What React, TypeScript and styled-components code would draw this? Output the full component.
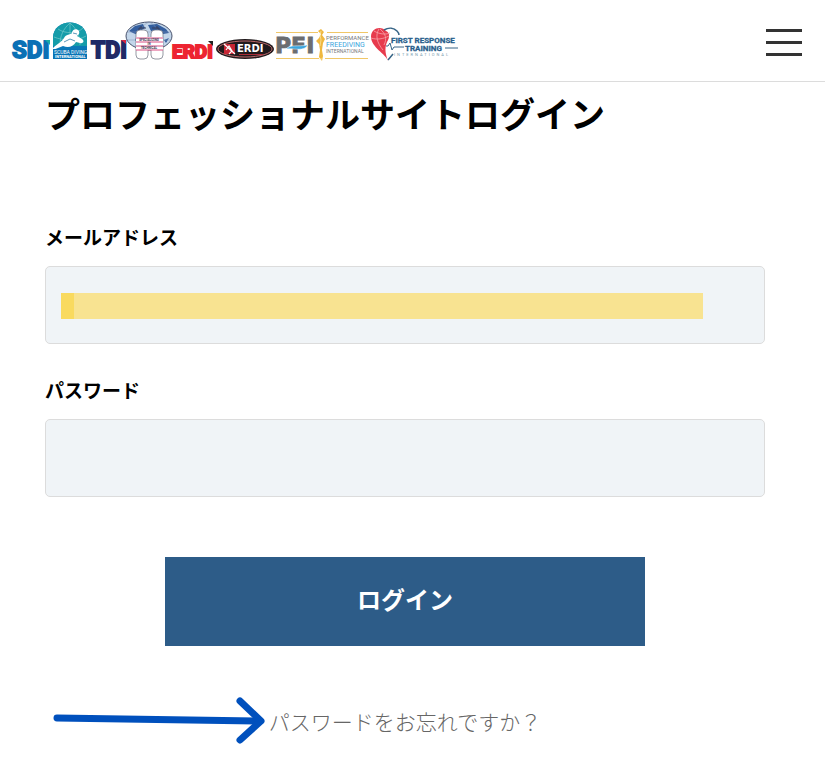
import React from "react";
import styled, { createGlobalStyle } from "styled-components";

const GlobalStyle = createGlobalStyle`
  *, *::before, *::after { box-sizing: border-box; }
  body {
    margin: 0;
    background: #fff;
    color: #000;
    font-family: "Noto Sans CJK JP", "Noto Sans", sans-serif;
  }
`;

const Header = styled.header`
  display: flex;
  align-items: center;
  justify-content: space-between;
  padding: 20px 23px 19px 11px;
  border-bottom: 1px solid #dcdcdc;
`;

const LogoLink = styled.a`
  display: flex;
  align-items: center;
  height: 42px;
  text-decoration: none;
`;

const Logo = styled.svg`
  display: block;
  flex: none;
  overflow: visible;
`;

const MenuButton = styled.button`
  display: flex;
  flex-direction: column;
  gap: 9px;
  padding: 2px 0 0;
  border: 0;
  background: none;
  cursor: pointer;
`;

const MenuBar = styled.span`
  width: 36px;
  height: 3px;
  background: #333;
`;

const Main = styled.main`
  padding: 8px 60px 16px 45px;
`;

const Title = styled.h1`
  margin: 0 0 88px;
  font-size: 35px;
  line-height: 45px;
  font-weight: 700;
`;

const Field = styled.div`
  margin-bottom: 32px;
`;

const Label = styled.label`
  display: block;
  margin-bottom: 16px;
  font-size: 19px;
  line-height: 27px;
  font-weight: 700;
`;

const InputFrame = styled.div`
  position: relative;
`;

const Input = styled.input`
  display: block;
  width: 100%;
  height: 78px;
  padding: 0 16px;
  border: 1px solid #dcdcdc;
  border-radius: 5px;
  background: #f0f4f7;
  font: inherit;
  font-size: 20px;
`;

const Highlight = styled.span`
  position: absolute;
  top: 27px;
  left: 16px;
  right: 62px;
  height: 26px;
  border-left: 13px solid #f9da5f;
  background: #f8e391;
  pointer-events: none;
`;

const SubmitButton = styled.button`
  display: block;
  width: 66.6667%;
  height: 89px;
  margin: 60px auto 51px;
  padding: 0 0 6px;
  border: 0;
  background: #2d5c88;
  color: #fff;
  font: inherit;
  font-size: 24px;
  font-weight: 700;
  cursor: pointer;
`;

const ForgotRow = styled.div`
  display: grid;
  grid-template-columns: 1fr auto 1fr;
  align-items: center;
`;

const Arrow = styled.svg`
  display: block;
  justify-self: end;
  margin-right: 4px;
`;

const ForgotLink = styled.a`
  color: #666;
  font-size: 21px;
  line-height: 32px;
  font-weight: 300;
  text-decoration: none;
`;

const roboto = { fontFamily: "Roboto, sans-serif" };
const robotoBold = { fontFamily: "Roboto, sans-serif", fontWeight: 700 };
const wideBold = { fontFamily: '"DejaVu Sans", sans-serif', fontWeight: 700 };

const SdiLogo = () => (
  <Logo width="78" height="42" viewBox="11 20 78 42">
    <text x="12" y="58" fontSize="24" fill="#0b70b5" stroke="#0b70b5" strokeWidth="1.8" {...robotoBold}>SDI</text>
    <path d="M45 40L50 45V40Z" fill="#19a9a5" />
    <path d="M53 59V38C53 18 86 17 87 38V59Z" fill="#0b78b8" />
    <path d="M53 46V38C53 18 86 17 87 38V46Z" fill="#159ca9" />
    <path d="M58 29C65 34 77 34 83 28M54 37C63 41 78 41 86 36M70 23C63 29 60 36 60 45M70 23C77 29 80 36 80 45M70 23V44" fill="none" stroke="#74c9ca" strokeWidth="0.7" />
    <path d="M53 48C58 43 62 42 64 38C66 34 70 35 72 33C72 29 77 28 79 31C80 34 78 35 77 36L82 39C85 41 83 44 80 43L76 42C73 47 68 48 63 46L53 50Z" fill="#fff" />
    <path d="M64 42L70 39L75 41M73 33L77 34" fill="none" stroke="#176d9d" strokeWidth="0.7" />
    <path d="M53 49H87V59H53Z" fill="#0874b6" />
    <text x="54" y="54" fontSize="5" fill="#fff" {...roboto}>SCUBA DIVING</text>
    <text x="55" y="58" fontSize="4" fill="#fff" {...robotoBold}>INTERNATIONAL</text>
  </Logo>
);

const TdiLogo = () => (
  <Logo width="83" height="42" viewBox="89 20 83 42">
    <text x="91" y="58" fontSize="23" fill="#202a66" stroke="#202a66" strokeWidth="1.8" {...robotoBold}>TDI</text>
    <path d="M121 40L126 44V40Z" fill="#d52742" />
    <ellipse cx="149" cy="36" rx="23" ry="14" fill="#c3d6ea" stroke="#49536d" strokeWidth="1" />
    <path d="M129 31L135 26L143 24L145 28L140 31L138 35L133 33ZM137 36L142 39L139 45L135 40ZM148 25L157 24L166 29L169 33L163 34L160 31L157 35L151 31ZM154 35L160 36L158 44L154 40ZM164 40L169 38L166 43Z" fill="#345f9f" />
    <path d="M127 32H171M127 40H171M149 22C136 28 136 43 149 50M149 22C162 28 162 43 149 50" fill="none" stroke="#8193b5" strokeWidth="0.5" />
    <path d="M139 31V28H146M159 31V28H152M141 26V29M157 26V29" fill="none" stroke="#38415f" strokeWidth="1" />
    <rect x="136" y="30" width="12" height="29" rx="4" fill="#fff" stroke="#696f7c" strokeWidth="0.7" />
    <rect x="151" y="30" width="12" height="29" rx="4" fill="#fff" stroke="#696f7c" strokeWidth="0.7" />
    <path d="M136 37H163V50H136Z" fill="#fff" />
    <path d="M136 38H163M136 42H163M136 46H163M136 50H163" stroke="#d94e83" strokeWidth="1" />
    <g fill="#44314f" textAnchor="middle" {...robotoBold}>
      <text x="149" y="41" fontSize="3">SPECIALIZING</text>
      <text x="149" y="45" fontSize="3">IN</text>
      <text x="149" y="49" fontSize="3">TECHNICAL</text>
    </g>
  </Logo>
);

const ErdiLogo = () => (
  <Logo width="103" height="42" viewBox="172 20 103 42">
    <text x="172" y="58" fontSize="19" fill="#ed2430" stroke="#ed2430" strokeWidth="2" {...robotoBold}>ERDI</text>
    <path d="M208 41H213V46Z" fill="#222" />
    <ellipse cx="245" cy="49" rx="29" ry="10" fill="#211a1c" />
    <ellipse cx="245" cy="49" rx="27" ry="8" fill="none" stroke="#b96669" strokeWidth="1" />
    <path d="M224 44H235V54H224Z" fill="#c72634" />
    <path d="M224 44L235 54M226 50L229 46L232 51L229 54" fill="none" stroke="#fff" strokeWidth="1.2" />
    <text x="237" y="52" fontSize="10" fill="#fff" {...wideBold}>ERDI</text>
    <path d="M239 54.5H263" stroke="#a92c37" strokeWidth="1" />
  </Logo>
);

const PfiLogo = () => (
  <Logo width="94" height="42" viewBox="275 20 94 42">
    <path d="M276 32.5H318M327 32.5H368M276 58.5H319M325 58.5H368" stroke="#f0c768" strokeWidth="1" />
    <text x="275" y="53" fontSize="22" fill="#6b6d70" stroke="#6b6d70" strokeWidth="0.8" {...wideBold}>PFI</text>
    <path d="M286 49C291 44 297 47 308 45C303 52 296 48 286 49Z" fill="#3ca6df" stroke="#fff" strokeWidth="0.5" />
    <path d="M321 29L324 32L322 35L325 39L323 43L322 50L323 56L322 61L319 57L320 50L319 44L316 41L319 38L321 34L318 31Z" fill="#efb83f" />
    <path d="M321 31L320 35L321 40L320 46M319 59H322" fill="none" stroke="#fff1bb" strokeWidth="0.6" />
    <text x="326" y="40" fontSize="6" fill="#77797b" {...roboto}>PERFORMANCE</text>
    <text x="326" y="47" fontSize="7" fill="#39a4dd" {...roboto}>FREEDIVING</text>
    <text x="326" y="53" fontSize="5" fill="#77797b" {...roboto}>INTERNATIONAL</text>
  </Logo>
);

const ResponseLogo = () => (
  <Logo width="91" height="42" viewBox="369 20 91 42">
    <path d="M388 61C386 54 371 47 371 37C371 27 382 26 386 31C390 33 390 37 387 42C384 49 386 55 388 61Z" fill="#e73b4d" />
    <path d="M384 30C389 27 394 28 397 31C399 33 399 34 399 35M388 60L393 54" fill="none" stroke="#376587" strokeWidth="1.5" />
    <path d="M371 38C377 40 383 39 389 36M374 31C379 34 385 35 390 33M379 29C375 35 377 43 383 50M380 29C386 34 387 39 384 45" fill="none" stroke="#f7a4aa" strokeWidth="0.8" />
    <path d="M386 46H388L390 43L392 50L394 47H404M445 48H458" fill="none" stroke="#376587" strokeWidth="1" />
    <text x="391" y="43" fontSize="8" fill="#285e8c" stroke="#285e8c" strokeWidth="0.3" {...robotoBold}>FIRST RESPONSE</text>
    <text x="405" y="51" fontSize="8" fill="#285e8c" stroke="#285e8c" strokeWidth="0.3" {...robotoBold}>TRAINING</text>
    <text x="394" y="56" fontSize="4" letterSpacing="2" fill="#789bad" {...roboto}>INTERNATIONAL</text>
  </Logo>
);

export default function App() {
  return (
    <>
      <GlobalStyle />
      <Header>
        <LogoLink href="#" aria-label="SDI TDI ERDI PFI First Response Training">
          <SdiLogo />
          <TdiLogo />
          <ErdiLogo />
          <PfiLogo />
          <ResponseLogo />
        </LogoLink>
        <MenuButton type="button" aria-label="メニュー">
          <MenuBar />
          <MenuBar />
          <MenuBar />
        </MenuButton>
      </Header>
      <Main>
        <Title>プロフェッショナルサイトログイン</Title>
        <form onSubmit={(event) => event.preventDefault()}>
          <Field>
            <Label htmlFor="email">メールアドレス</Label>
            <InputFrame>
              <Input id="email" type="email" autoComplete="email" />
              <Highlight />
            </InputFrame>
          </Field>
          <Field>
            <Label htmlFor="password">パスワード</Label>
            <Input id="password" type="password" autoComplete="current-password" />
          </Field>
          <SubmitButton type="submit">ログイン</SubmitButton>
        </form>
        <ForgotRow>
          <Arrow width="212" height="48" viewBox="0 0 212 48" fill="none" stroke="#0050bd" strokeLinecap="round" strokeLinejoin="round" aria-hidden="true">
            <path d="M4 21L204 24" strokeWidth="7" />
            <path d="M187 4L208 24L187 43" strokeWidth="7" />
          </Arrow>
          <ForgotLink href="#">パスワードをお忘れですか？</ForgotLink>
        </ForgotRow>
      </Main>
    </>
  );
}
